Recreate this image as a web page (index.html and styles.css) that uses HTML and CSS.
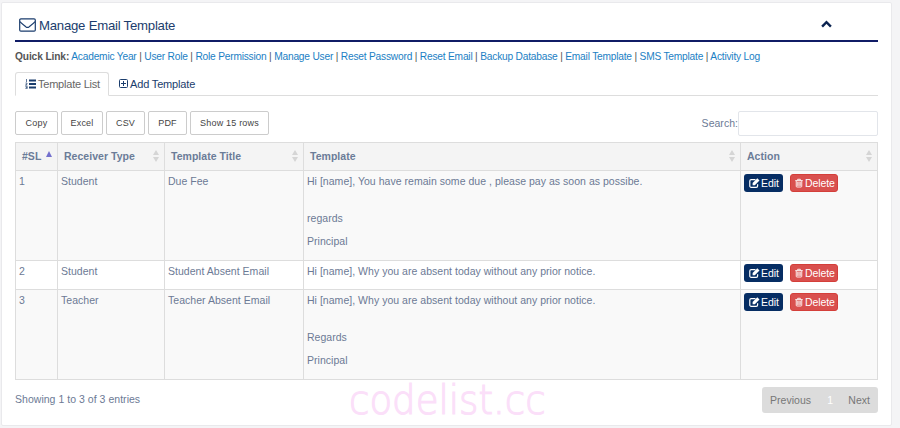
FILE: index.html
```html
<!DOCTYPE html>
<html lang="en">
<head>
<meta charset="utf-8">
<title>Manage Email Template</title>
<link rel="stylesheet" href="styles.css">
</head>
<body>
<svg class="defs" width="0" height="0">
  <symbol id="edit" viewBox="0 0 11 10"><path d="M8.600 6.200v1.700q0 1.400-1.400 1.400H2.200Q.8 9.300.8 7.900V3Q.8 1.600 2.200 1.600h4.300" fill="none" stroke="currentColor" stroke-width="1.200"/><path d="M3.600 5 8.300.3l2.200 2.200-4.700 4.700H3.600z" fill="currentColor"/></symbol>
  <symbol id="trash" viewBox="0 0 9 10"><path d="M.3 2.300h8.400M3 2V.8h3V2M1.400 2.500v6.200q0 .8.8.8h4.600q.8 0 .8-.8V2.500M3.100 3.500v4.800M4.500 3.500v4.800M5.900 3.500v4.800" fill="none" stroke="currentColor" stroke-width="1"/></symbol>
  <symbol id="sort" viewBox="0 0 6 12"><path d="M3 0 6 5H0zM3 12 0 7h6z" fill="#d5d5d5"/></symbol>
</svg>
<main class="card">
  <header class="title">
    <svg class="mail" viewBox="0 0 17 14"><rect x=".7" y=".9" width="15.600" height="12.200" rx="1.200"/><path d="M.9 3.700C3 6 5.300 7.600 7 8.900q1.500 1 3 0c1.700-1.300 4-2.900 6.100-5.200"/></svg>
    <h1>Manage Email Template</h1>
    <svg class="chevron" viewBox="0 0 10 7"><path d="M1 5.800 5 1.800l4 4"/></svg>
  </header>
  <nav class="links"><b>Quick Link:</b> <a>Academic Year</a> | <a>User Role</a> | <a>Role Permission</a> | <a>Manage User</a> | <a>Reset Password</a> | <a>Reset Email</a> | <a>Backup Database</a> | <a>Email Template</a> | <a>SMS Template</a> | <a>Activity Log</a></nav>
  <div class="tabs">
    <div class="tab active"><svg class="list" viewBox="0 0 11 10"><path d="M4 1.500h7M4 5h7M4 8.500h7" stroke-width="1.800"/><path d="M1.500 0v3M.5 4h1.500v1L.5 6H2.300M.3 7.300h1.900v2.400H.3M.8 8.500h1.400" stroke-width=".7"/></svg>Template List</div>
    <div class="tab"><svg class="plus" viewBox="0 0 9 9"><rect x=".5" y=".5" width="8" height="8" rx="1"/><path d="M4.500 2v5M2 4.500h5"/></svg>Add Template</div>
  </div>
  <div class="tools">
    <button class="copy">Copy</button><button class="excel">Excel</button><button class="csv">CSV</button><button class="pdf">PDF</button><button class="rows">Show 15 rows</button>
    <label>Search:<input type="text"></label>
  </div>
  <table>
    <colgroup><col class="c1"><col class="c2"><col class="c3"><col class="c4"><col class="c5"></colgroup>
    <thead><tr>
      <th><div>#SL<i class="asc"></i></div></th>
      <th><div>Receiver Type<svg><use href="#sort"/></svg></div></th>
      <th><div>Template Title<svg><use href="#sort"/></svg></div></th>
      <th><div>Template<svg><use href="#sort"/></svg></div></th>
      <th><div>Action<svg><use href="#sort"/></svg></div></th>
    </tr></thead>
    <tbody>
      <tr class="tall"><td>1</td><td>Student</td><td>Due Fee</td><td><p class="first">Hi [name], You have remain some due , please pay as soon as possibe.</p><p>regards</p><p>Principal</p></td>
        <td><div class="actions"><a class="btn edit"><svg><use href="#edit"/></svg>Edit</a><a class="btn delete"><svg><use href="#trash"/></svg>Delete</a></div></td></tr>
      <tr class="short"><td>2</td><td>Student</td><td>Student Absent Email</td><td>Hi [name], Why you are absent today without any prior notice.</td>
        <td><div class="actions"><a class="btn edit"><svg><use href="#edit"/></svg>Edit</a><a class="btn delete"><svg><use href="#trash"/></svg>Delete</a></div></td></tr>
      <tr class="tall"><td>3</td><td>Teacher</td><td>Teacher Absent Email</td><td><p class="first">Hi [name], Why you are absent today without any prior notice.</p><p>Regards</p><p>Principal</p></td>
        <td><div class="actions"><a class="btn edit"><svg><use href="#edit"/></svg>Edit</a><a class="btn delete"><svg><use href="#trash"/></svg>Delete</a></div></td></tr>
    </tbody>
  </table>
  <footer>
    <span>Showing 1 to 3 of 3 entries</span>
    <div class="pager"><span>Previous</span><span class="current">1</span><span>Next</span></div>
  </footer>
</main>
<div class="watermark">codelist.cc</div>
</body>
</html>
```
FILE: styles.css
```css
* { box-sizing: border-box; }
body { margin: 0; height: 428px; overflow: hidden; padding: 2px 8px 2px 1px; background: #f4f4f6; font: 10.5px/14px "Liberation Sans", Arial, sans-serif; letter-spacing: .03px; color: #6c7a95; }
.defs { position: absolute; }
svg { flex: none; }
.card { height: 424px; background: #fff; border: 1px solid #e9e9ec; border-radius: 2px; padding: 0 13px; }
.title { height: 39px; display: flex; align-items: center; border-bottom: 2px solid #101c66; padding: 7px 46px 0 4px; color: #1b3d6d; }
.title h1 { margin: 2px auto 0 3px; font-size: 13.200px; line-height: 18px; font-weight: 400; letter-spacing: -.24px; }
.mail { width: 17px; height: 14px; fill: none; stroke: #1b3d6d; stroke-width: 1.200; }
.chevron { width: 11px; height: 8px; margin-bottom: 2px; fill: none; stroke: #0b2350; stroke-width: 2.200; }
.links { margin-top: 8px; height: 14px; font-size: 10.2px; letter-spacing: -.205px; white-space: nowrap; color: #555; }
.links a { color: #1b80c4; }
.links b { color: #555; letter-spacing: -.12px; }
.tabs { display: flex; margin-top: 8px; height: 24px; border-bottom: 1px solid #ddd; color: #1b3d6d; }
.tab { display: flex; align-items: center; height: 24px; padding: 0 10px 1px; font-size: 11px; letter-spacing: -.16px; }
.tab.active { width: 94px; padding: 0 0 1px 9px; border: 1px solid #ddd; border-bottom-color: #fff; border-radius: 3px 3px 0 0; color: #666; background: #fff; letter-spacing: -.22px; }
.list { width: 11px; height: 10px; margin-right: 2px; fill: none; stroke: #1b3d6d; }
.plus { width: 9px; height: 9px; margin-right: 2px; fill: none; stroke: #1b3d6d; }
.tools { display: flex; margin-top: 15px; height: 24px; }
button { height: 24px; padding: 0; border: 1px solid #ccc; border-radius: 2px; background: #fff; color: #444; font: 9px/14px "Liberation Sans", Arial, sans-serif; letter-spacing: .2px; margin-right: 3px; }
.copy { width: 43px; }
.excel { width: 42px; }
.csv { width: 39px; }
.pdf { width: 39px; }
.rows { width: 79px; }
label { display: flex; align-items: center; margin-left: auto; }
input { width: 140px; height: 25px; border: 1px solid #e2e5ea; border-radius: 2px; padding: 0; background: #fff; }
table { margin-top: 7px; width: 863px; table-layout: fixed; border-collapse: collapse; }
.c1 { width: 42px; }
.c2 { width: 107px; }
.c3 { width: 139px; }
.c4 { width: 437px; }
.c5 { width: 137px; }
th, td { border: 1px solid #ddd; text-align: left; vertical-align: top; padding: 3px 3px 0; }
th { height: 28px; padding: 0 5px 1px 6px; vertical-align: middle; background: #f4f4f4; color: #6b7c98; }
th div { display: flex; align-items: center; justify-content: space-between; }
th svg { width: 6px; height: 12px; }
.asc { border: 3px solid transparent; border-top: 0; border-bottom: 6px solid #7370cd; margin-bottom: 4px; }
td { white-space: nowrap; }
.tall { height: 90px; background: #f9f9f9; }
.short { height: 29px; }
p { margin: 0 0 9px; }
p.first { margin-bottom: 23px; }
p:last-child { margin: 0; }
.actions { display: flex; gap: 7px; }
.btn { display: flex; align-items: center; height: 18px; border-radius: 3px; color: #fff; padding-left: 5px; letter-spacing: -.1px; }
.btn svg { width: 11px; height: 10px; margin-right: 1px; }
.edit { width: 39px; background: #062d63; }
.delete { width: 48px; background: #d9504e; border: 1px solid #d43f3a; padding-left: 4px; }
.delete svg { width: 8px; height: 10px; margin-right: 2px; }
footer { display: flex; justify-content: space-between; align-items: flex-start; margin-top: 7px; }
footer > span { margin-top: 5px; }
.pager { display: flex; justify-content: space-between; align-items: center; width: 116px; height: 26px; padding: 0 8px 1px; background: #dcdcdc; border-radius: 3px; color: #777; }
.current { color: #fff; margin-left: 5px; margin-right: 4px; }
.watermark { position: absolute; left: 349px; top: 375px; font: 200 41px/50px "DejaVu Sans", sans-serif; letter-spacing: 0; color: #fbdff9; -webkit-text-stroke: 1.2px #fbdff9; transform: scaleX(.905); transform-origin: 0 0; }
```
